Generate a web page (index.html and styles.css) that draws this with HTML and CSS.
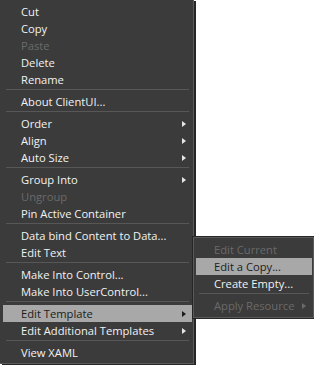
FILE: index.html
```html
<!DOCTYPE html>
<html>
<head>
<meta charset="utf-8">
<link rel="stylesheet" href="styles.css">
</head>
<body>
<div class="menu main">
  <div class="item">Cut</div>
  <div class="item">Copy</div>
  <div class="item disabled">Paste</div>
  <div class="item">Delete</div>
  <div class="item">Rename</div>
  <div class="sep"></div>
  <div class="item">About ClientUI...</div>
  <div class="sep"></div>
  <div class="item sub">Order</div>
  <div class="item sub">Align</div>
  <div class="item sub">Auto Size</div>
  <div class="sep"></div>
  <div class="item sub">Group Into</div>
  <div class="item disabled">Ungroup</div>
  <div class="item">Pin Active Container</div>
  <div class="sep"></div>
  <div class="item">Data bind Content to Data...</div>
  <div class="item">Edit Text</div>
  <div class="sep"></div>
  <div class="item">Make Into Control...</div>
  <div class="item">Make Into UserControl...</div>
  <div class="sep"></div>
  <div class="item sub active">Edit Template</div>
  <div class="item sub">Edit Additional Templates</div>
  <div class="sep"></div>
  <div class="item">View XAML</div>
</div>
<div class="menu submenu">
  <div class="item disabled">Edit Current</div>
  <div class="item active">Edit a Copy...</div>
  <div class="item">Create Empty...</div>
  <div class="sep"></div>
  <div class="item sub disabled">Apply Resource</div>
</div>
</body>
</html>
```
FILE: styles.css
```css
html, body {
  margin: 0;
  padding: 0;
  background: #ffffff;
}
body {
  position: relative;
  width: 314px;
  height: 365px;
  overflow: hidden;
  font-family: "Open Sans", "Noto Sans", sans-serif;
  font-size: 11.2px;
}
.menu {
  background: #3b3b3b;
  color: #f2f2f2;
  box-sizing: border-box;
}
.main {
  width: 194px;
  padding: 3px 1px 2px 3px;
  border-right: 1px solid #5a5a5a;
  border-bottom: 1px solid #5a5a5a;
  box-shadow: 2px 1px 0 0 #262626;
}
.submenu {
  position: absolute;
  left: 193px;
  top: 237px;
  width: 121px;
  padding: 3px 1px 3px 2px;
  border: 1px solid #5a5a5a;
  box-shadow: 0 0 0 1px #262626;
}
.item {
  height: 17px;
  line-height: 17px;
  padding: 0 6px 0 18px;
  white-space: nowrap;
  display: flex;
  align-items: center;
  justify-content: space-between;
}
.item.disabled {
  color: #6a6a6a;
}
.item.active {
  background: #a8a8a8;
  color: #1c1c1c;
}
.item.sub::after {
  content: "";
  width: 0;
  height: 0;
  border-top: 3.5px solid transparent;
  border-bottom: 3.5px solid transparent;
  border-left: 4px solid #e6e6e6;
}
.item.sub.active::after {
  border-left-color: #1c1c1c;
}
.item.sub.disabled::after {
  border-left-color: #6a6a6a;
}
.sep {
  height: 1px;
  margin: 1px 3px 3px 3px;
  background: #575757;
}
```
